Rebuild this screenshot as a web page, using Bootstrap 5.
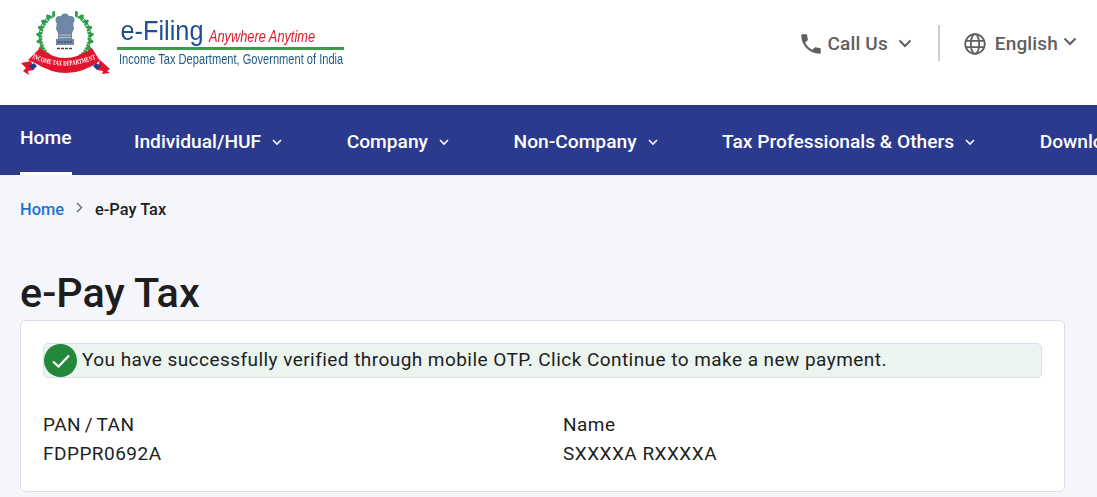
<!DOCTYPE html>
<html lang="en"><head><meta charset="utf-8"><title>e-Pay Tax</title>
<link href="https://cdn.jsdelivr.net/npm/bootstrap@5.3.0/dist/css/bootstrap.min.css" rel="stylesheet">
<style>
html,body{height:497px;overflow:hidden}
body{font-family:Roboto,sans-serif;background:#f5f6fb;color:#1e1e1e}
.top-bar{height:105px;background:#fff;padding:0 20px}
.logo-box{margin-top:8px;width:400px;height:70px;flex:none;filter:blur(.35px)}
.top-tools{color:#5f5f5f;font-size:19px;letter-spacing:.15px;font-weight:500;height:36px;margin-top:25px}
.tool-item{display:flex;align-items:center;padding-top:2px}
.tool-sep{width:2px;height:36px;background:#cfcfcf;margin:0 23px 0 26px}
.tool-phone{margin-right:4px}
.tool-globe{margin-right:8px}
.chev-a{margin-left:10px;margin-bottom:2px}
.chev-b{margin-left:5px;margin-bottom:6px}
.main-nav{height:70px;background:#2b3a8c;padding-left:20px;flex-wrap:nowrap;white-space:nowrap;overflow:hidden}
.nav-entry{color:#fff;font-size:19.2px;font-weight:500;height:70px;display:flex;align-items:center;text-decoration:none;margin-right:64.5px;flex:none;padding-top:4px}
.nav-entry svg{margin-left:11px;margin-top:1px}
.nav-active{border-bottom:3px solid #fff;margin-right:62.5px;padding-bottom:3px;padding-top:3px}
.crumbs{font-size:16.4px;font-weight:500;padding:23px 20px 0;height:75px;align-items:flex-start}
.crumbs a{color:#1a73d4;text-decoration:none}
.crumb-chev{margin:4px 8px 0 11px}
.page-title{font-size:41.4px;font-weight:500;line-height:48px;margin:19px 20px 0;height:51px;color:#1e1e1e}
.pay-panel{margin:0 32px 0 20px;height:172px;background:#fff;border:1px solid #dcdcec;border-radius:6px;padding:22px}
.ok-strip{height:35px;background:#ebf4ee;border:1px solid #dcdcec;border-radius:5px;font-size:19px;letter-spacing:.45px;color:#1e1e1e;white-space:nowrap}
.ok-dot{width:33px;height:33px;border-radius:50%;background:#23883a;display:flex;align-items:center;justify-content:center;margin-right:5px;flex:none}
.info-cols{margin-top:32px;font-size:19px;line-height:29px;letter-spacing:.48px}
.info-col{width:520px;flex:none}
.pan-label{word-spacing:-1.5px}
</style></head>
<body>
<header class="top-bar d-flex justify-content-between">
 <svg class="logo-box" viewBox="0 0 400 70" role="img" aria-label="e-Filing logo">
  <defs>
   <g id="lf" fill="#2f9e4c"><ellipse cx="42.500" cy="3.500" rx="1.500" ry="3.400" transform="rotate(-35 42.500 3.500)"/><ellipse cx="47.500" cy="3.500" rx="1.500" ry="3.400" transform="rotate(35 47.500 3.500)"/></g>
  </defs>
  <path d="M30 7A26 26 0 0 0 42 54M60 7A26 26 0 0 1 48 54" fill="none" stroke="#1f8a3c" stroke-width="1"/>
  <g>
   <use href="#lf" transform="rotate(32 45 29)"/><use href="#lf" transform="rotate(47 45 29)"/><use href="#lf" transform="rotate(62 45 29)"/><use href="#lf" transform="rotate(77 45 29)"/><use href="#lf" transform="rotate(92 45 29)"/><use href="#lf" transform="rotate(107 45 29)"/><use href="#lf" transform="rotate(122 45 29)"/><use href="#lf" transform="rotate(137 45 29)"/><use href="#lf" transform="rotate(152 45 29)"/>
   <use href="#lf" transform="rotate(-32 45 29)"/><use href="#lf" transform="rotate(-47 45 29)"/><use href="#lf" transform="rotate(-62 45 29)"/><use href="#lf" transform="rotate(-77 45 29)"/><use href="#lf" transform="rotate(-92 45 29)"/><use href="#lf" transform="rotate(-107 45 29)"/><use href="#lf" transform="rotate(-122 45 29)"/><use href="#lf" transform="rotate(-137 45 29)"/><use href="#lf" transform="rotate(-152 45 29)"/>
  </g>
  <g fill="#6f86a5">
   <circle cx="39.500" cy="12" r="4"/><circle cx="45" cy="10" r="4.500"/><circle cx="50.500" cy="12" r="4"/>
   <path d="M37 14h16l1 7-2 4H38l-2-4z"/>
   <rect x="38" y="25" width="14" height="8"/><rect x="36" y="31" width="18" height="6"/>
  </g>
  <path d="M39 27h12M39 29.500h12" stroke="#c9d3e0" stroke-width=".8"/>
  <path d="M38 34h14" stroke="#3d4f6b" stroke-width="1.400" stroke-dasharray="2 1"/>
  <path d="M37 40.500h16" stroke="#444" stroke-width="1.300" stroke-dasharray="3 1"/>
  <path d="M1 55l10-2 3 9-6 1 1 4-6-4 3-3z" fill="#e0142d"/>
  <path d="M90 61l-10-9-3 10 6 1-1 3 8-1-3-2z" fill="#e0142d"/>
  <path d="M8 52l12-12q24 20 52 0l8 13q-32 23-65 2z" fill="#e0142d"/>
  <path d="M9 58l5-3 3 3-4 4zM81 58l-5-3-3 3 4 4z" fill="#1f3f8f"/>
  <path id="rb" d="M12 50q31 15 66 0" fill="none"/>
  <text font-family="Liberation Serif" font-size="7" font-weight="700" fill="#fff"><textPath href="#rb" textLength="66" lengthAdjust="spacingAndGlyphs">INCOME TAX DEPARTMENT</textPath></text>
  <text x="100.500" y="32" font-family="Liberation Sans" font-size="28" fill="#1d4f91" textLength="83" lengthAdjust="spacingAndGlyphs">e-Filing</text>
  <text x="189" y="33.500" font-family="Liberation Sans" font-size="17" font-style="italic" fill="#d81c2c" textLength="106" lengthAdjust="spacingAndGlyphs">Anywhere Anytime</text>
  <rect x="97" y="39" width="227" height="3" fill="#3f9a4b"/>
  <text transform="translate(99 56) scale(.74 1)" font-family="Liberation Sans" font-size="15" fill="#1f5a86">Income Tax Department, Government of India</text>
 </svg>
 <div class="top-tools d-flex">
  <div class="tool-item">
   <svg width="26" height="26" viewBox="0 0 24 24" fill="#5f5f5f" class="tool-phone"><path d="M6.600 10.800c1.400 2.800 3.800 5.100 6.600 6.600l2.200-2.200c.3-.3.7-.4 1-.2 1.100.4 2.300.6 3.600.6.600 0 1 .4 1 1V20c0 .6-.4 1-1 1C10.600 21 3 13.400 3 4c0-.6.4-1 1-1h3.500c.6 0 1 .4 1 1 0 1.300.2 2.500.6 3.600.1.300 0 .7-.2 1z"/></svg>
   <span>Call Us</span>
   <svg width="14" height="9" viewBox="0 0 14 9" fill="none" stroke="#5f5f5f" stroke-width="2" class="chev-a"><path d="M1.500 1.500L7 7l5.500-5.500"/></svg>
  </div>
  <div class="tool-sep"></div>
  <div class="tool-item">
   <svg width="24" height="24" viewBox="0 0 24 24" fill="none" stroke="#5f5f5f" stroke-width="1.800" class="tool-globe"><circle cx="12" cy="12" r="9.800"/><ellipse cx="12" cy="12" rx="4.200" ry="9.800"/><path d="M3 8.800h18M3 15.200h18"/></svg>
   <span>English</span>
   <svg width="14" height="9" viewBox="0 0 14 9" fill="none" stroke="#5f5f5f" stroke-width="2" class="chev-b"><path d="M1.500 1.500L7 7l5.500-5.500"/></svg>
  </div>
 </div>
</header>
<nav class="main-nav d-flex">
 <a class="nav-entry nav-active" href="#">Home</a>
 <a class="nav-entry" href="#">Individual/HUF<svg width="10" height="7" viewBox="0 0 10 7" fill="none" stroke="#fff" stroke-width="1.600"><path d="M1 1l4 4 4-4"/></svg></a>
 <a class="nav-entry" href="#">Company<svg width="10" height="7" viewBox="0 0 10 7" fill="none" stroke="#fff" stroke-width="1.600"><path d="M1 1l4 4 4-4"/></svg></a>
 <a class="nav-entry" href="#">Non-Company<svg width="10" height="7" viewBox="0 0 10 7" fill="none" stroke="#fff" stroke-width="1.600"><path d="M1 1l4 4 4-4"/></svg></a>
 <a class="nav-entry" href="#">Tax Professionals &amp; Others<svg width="10" height="7" viewBox="0 0 10 7" fill="none" stroke="#fff" stroke-width="1.600"><path d="M1 1l4 4 4-4"/></svg></a>
 <a class="nav-entry" href="#">Downloads</a>
</nav>
<div class="crumbs d-flex">
 <a href="#">Home</a>
 <svg width="8" height="11" viewBox="0 0 8 11" fill="none" stroke="#666" stroke-width="1.400" class="crumb-chev"><path d="M2 1l4.500 4.500L2 10"/></svg>
 <span class="ms-1">e-Pay Tax</span>
</div>
<h1 class="page-title">e-Pay Tax</h1>
<section class="pay-panel">
 <div class="ok-strip d-flex align-items-center">
  <span class="ok-dot"><svg width="20" height="16" viewBox="0 0 20 16" fill="none" stroke="#fff" stroke-width="2.300"><path d="M2 8.500l5.500 5L18 2.500"/></svg></span>
  You have successfully verified through mobile OTP. Click Continue to make a new payment.
 </div>
 <div class="info-cols d-flex">
  <div class="info-col"><div class="pan-label">PAN / TAN</div><div>FDPPR0692A</div></div>
  <div class="info-col"><div>Name</div><div>SXXXXA RXXXXA</div></div>
 </div>
</section>
<script src="https://cdn.jsdelivr.net/npm/bootstrap@5.3.0/dist/js/bootstrap.bundle.min.js"></script>
</body></html>
